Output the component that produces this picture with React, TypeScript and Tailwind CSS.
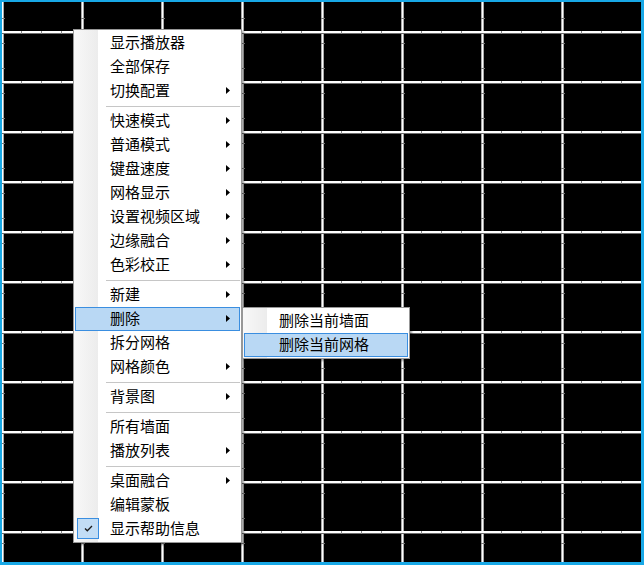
import React from 'react';

type MenuItem = {
  label: string;
  sub?: boolean;
  active?: boolean;
  checked?: boolean;
};

const mainGroups: MenuItem[][] = [
  [{ label: '显示播放器' }, { label: '全部保存' }, { label: '切换配置', sub: true }],
  [
    { label: '快速模式', sub: true },
    { label: '普通模式', sub: true },
    { label: '键盘速度', sub: true },
    { label: '网格显示', sub: true },
    { label: '设置视频区域', sub: true },
    { label: '边缘融合', sub: true },
    { label: '色彩校正', sub: true },
  ],
  [
    { label: '新建', sub: true },
    { label: '删除', sub: true, active: true },
    { label: '拆分网格' },
    { label: '网格颜色', sub: true },
  ],
  [{ label: '背景图', sub: true }],
  [{ label: '所有墙面' }, { label: '播放列表', sub: true }],
  [{ label: '桌面融合', sub: true }, { label: '编辑蒙板' }, { label: '显示帮助信息', checked: true }],
];

const subItems: MenuItem[] = [{ label: '删除当前墙面' }, { label: '删除当前网格', active: true }];

const menuFont = { fontFamily: '"Noto Sans CJK SC", "Microsoft YaHei", sans-serif' };

function Arrow() {
  return (
    <svg width="4" height="7" viewBox="0 0 4 7" className="block">
      <polygon points="0,0 4,3.5 0,7" fill="#000" />
    </svg>
  );
}

function Row({ item }: { item: MenuItem }) {
  return (
    <div
      className={`relative mx-px flex h-[24px] items-center justify-between border pb-[2px] pl-[34px] pr-[9px] ${
        item.active ? 'border-[#3a8ee0] bg-[#b9d8f4]' : 'border-transparent'
      }`}
    >
      {item.checked && (
        <div className="absolute left-[1px] top-0 flex h-[21px] w-[22px] items-center justify-center border border-[#3a8ee0] bg-[#c2ddf5]">
          <svg width="9" height="7" viewBox="0 0 9 7" className="block">
            <polyline points="1,3.5 3.3,5.8 8,1" fill="none" stroke="#1a1a1a" strokeWidth="1.3" />
          </svg>
        </div>
      )}
      <span className="text-[15px] leading-[20px] text-black">{item.label}</span>
      {item.sub && <Arrow />}
    </div>
  );
}

function Separator() {
  return (
    <div className="flex h-[6px] items-center pl-[32px] pr-px">
      <div className="h-px w-full bg-[#c6c6c6]" />
    </div>
  );
}

function GridCanvas() {
  return (
    <svg width="639" height="560" className="block">
      <defs>
        <pattern id="cell" x="-1" y="29" width="80" height="50" patternUnits="userSpaceOnUse">
          <rect x="0" y="0" width="1" height="50" fill="#a8a8a8" />
          <rect x="1" y="0" width="1" height="50" fill="#ffffff" />
          <rect x="2" y="0" width="1" height="50" fill="#a8a8a8" />
          <rect x="0" y="0" width="80" height="2" fill="#ffffff" />
          <rect x="0" y="2" width="80" height="1" fill="#6e6e6e" />
          <rect x="20" y="0" width="1" height="3" fill="#8a8a8a" />
          <rect x="40" y="0" width="1" height="3" fill="#8a8a8a" />
          <rect x="60" y="0" width="1" height="3" fill="#8a8a8a" />
          <rect x="0" y="12" width="4" height="1" fill="#7a7a7a" />
          <rect x="0" y="37" width="4" height="1" fill="#7a7a7a" />
        </pattern>
      </defs>
      <rect width="639" height="560" fill="#000" />
      <rect width="639" height="560" fill="url(#cell)" />
    </svg>
  );
}

export default function App() {
  return (
    <div
      className="relative h-[565px] w-[644px] overflow-hidden border-b-[3px] border-l-2 border-r-[3px] border-t-2 border-[#18a8e6] bg-black"
      style={menuFont}
    >
      <GridCanvas />

      {/* main context menu */}
      <div className="absolute left-[71px] top-[27px] w-[169px] border border-[#979797] bg-[linear-gradient(to_right,#f8f8f8_0px,#ececec_24px,#ffffff_24px)] py-px shadow-[2px_2px_2px_rgba(0,0,0,0.35)]">
        {mainGroups.map((group, gi) => (
          <React.Fragment key={gi}>
            {gi > 0 && <Separator />}
            {group.map((item) => (
              <Row key={item.label} item={item} />
            ))}
          </React.Fragment>
        ))}
      </div>

      {/* submenu */}
      <div className="absolute left-[240px] top-[305px] w-[168px] border border-[#979797] bg-[linear-gradient(to_right,#f8f8f8_0px,#ececec_24px,#ffffff_24px)] py-px shadow-[2px_2px_2px_rgba(0,0,0,0.35)]">
        {subItems.map((item) => (
          <Row key={item.label} item={item} />
        ))}
      </div>
    </div>
  );
}
